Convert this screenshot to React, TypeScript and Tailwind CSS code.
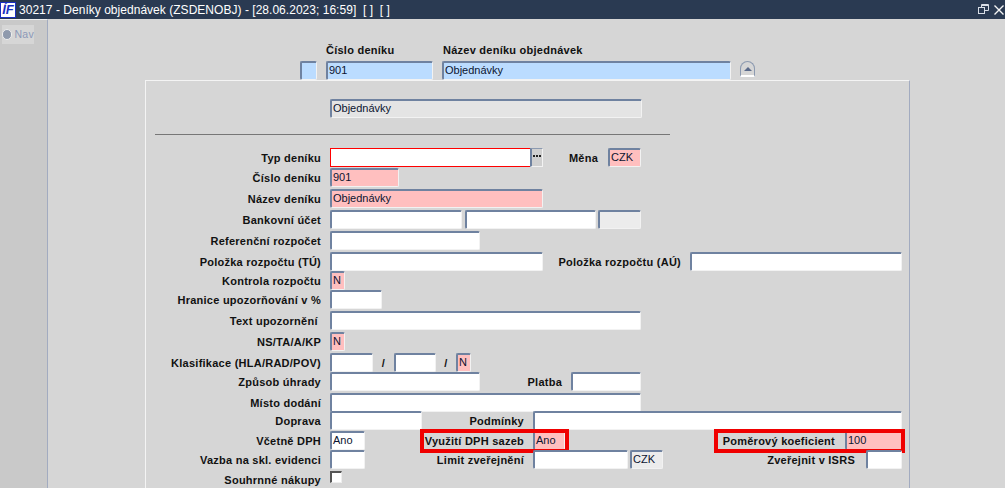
import React from "react";

type FP = { w: string; v?: string; bg?: string; c?: string };
const base =
  "h-[19px] shrink-0 border-t-2 border-l-2 border-r border-b border-t-[#6f82a0] border-l-[#6f82a0] border-r-[#f2f2f2] border-b-[#f2f2f2] rounded-[2px] pl-[1px] text-[11px] leading-[15px] text-[#0c1430] overflow-hidden";

function F({ w, v, bg = "bg-white", c = "" }: FP) {
  return <div className={`${base} ${w} ${bg} ${c}`}>{v}</div>;
}
function L({ children, c = "text-right" }: { children: React.ReactNode; c?: string }) {
  return <div className={`h-[19px] leading-[20px] shrink-0 font-bold text-[11px] tracking-[0.25px] text-[#111] whitespace-pre ${c}`}>{children}</div>;
}
function Row({ h, label, children }: { h: string; label: string; children?: React.ReactNode }) {
  return (
    <div className={`flex items-start relative ${h}`}>
      <L c="w-[174px] mr-[9px] text-right">{label}</L>
      {children}
    </div>
  );
}

export default function App() {
  return (
    <div className="w-[1005px] h-[488px] overflow-hidden flex flex-col bg-[#d6d6d6] font-['Liberation_Sans',Arial,sans-serif]">
      <div className="h-[19px] shrink-0 bg-[#2a3a52] flex items-center text-white">
        <div className="w-[16px] h-[16px] bg-white border border-[#1a2fc0] flex items-center justify-center text-[#1a2fc0] font-bold italic text-[13px] leading-none">ÍF</div>
        <div className="ml-[3px] text-[12px] tracking-[0.03px] whitespace-pre">30217 - Deníky objednávek (ZSDENOBJ) - [28.06.2023; 16:59]  [ ]  [ ]</div>
        <div className="ml-auto flex items-center gap-[5px] mr-[1px]">
          <svg width="11" height="11" viewBox="0 0 11 11" fill="none" stroke="#d8dde6" strokeWidth="1">
            <rect x="0.5" y="3.5" width="6" height="6" />
            <path d="M3.5 3V0.5H10.5V6.5H7" />
            <path d="M3 1.5H10.5" />
          </svg>
          <svg width="10" height="10" viewBox="0 0 10 10" fill="none" stroke="#f4f4f4" strokeWidth="1.4">
            <path d="M0.5 0.5L9.5 9.5M9.5 0.5L0.5 9.5" />
          </svg>
        </div>
      </div>
      <div className="flex flex-1 min-h-0">
        <div className="w-[48px] shrink-0 bg-[#c9c9c9] border-r border-[#a2abc0] border-t border-t-[#f0f0f0] pt-[5px] pl-[2px]">
          <div className="w-[32px] h-[19px] bg-[#d6d6d6] flex items-center gap-[2px]">
            <div className="w-[11px] h-[11px] rounded-full bg-[#8f9aad] border border-[#eeeeee]" />
            <span className="text-[10.5px] text-[#8c99b8] tracking-[0.3px]">Nav</span>
          </div>
        </div>
        <div className="flex-1 min-w-0 flex flex-col pl-[97px]">
          <div className="h-[42px] shrink-0 pt-[23px] flex items-start pl-[181px] font-bold text-[11px] tracking-[0.25px] text-[#111]">
            <span className="w-[117px]">Číslo deníku</span>
            <span>Název deníku objednávek</span>
          </div>
          <div className="h-[19px] shrink-0 flex items-start pl-[155px]">
            <F w="w-[17px]" bg="bg-[#bbdcff]" />
            <F w="w-[107px] ml-[9px]" bg="bg-[#bbdcff]" v="901" />
            <F w="w-[289px] ml-[9px]" bg="bg-[#bbdcff]" v="Objednávky" />
            <div className="ml-[9px] w-[15px] h-[16px] rounded-t-full border border-[#8c9ab0] border-b-2 border-b-white flex items-center justify-center">
              <div className="w-0 h-0 border-l-[4px] border-r-[4px] border-b-[4px] border-l-transparent border-r-transparent border-b-[#5a6a8a]" />
            </div>
          </div>
          <div className="w-[765px] flex-1 border-t border-l border-t-[#f4f4f4] border-l-[#f4f4f4] border-r border-r-[#a2abc0] pt-[18px] pl-[1px]">
            <div className="pl-[183px]">
              <F w="w-[312px]" bg="bg-[#e4e4e4]" v="Objednávky" />
            </div>
            <div className="mt-[16px] ml-[8px] w-[515px] h-[1px] bg-[#777]" />
            <div className="mt-[13px]">
              <Row h="h-[20px]" label="Typ deníku">
                <div className="h-[19px] w-[200px] bg-white border border-[#ff0000] shrink-0 border-r-0" />
                <div className="w-[13px] h-[19px] bg-[#d0d0d0] border-l-2 border-l-[#6f82a0] border-t border-t-[#8c9ab0] border-r border-r-[#f2f2f2] border-b border-b-[#f2f2f2] flex items-center justify-center gap-[1px] pb-[3px]">
                  <span className="w-[2px] h-[2px] bg-[#222]" />
                  <span className="w-[2px] h-[2px] bg-[#222]" />
                  <span className="w-[2px] h-[2px] bg-[#222]" />
                </div>
                <L c="w-[55px] text-right">Měna</L>
                <F w="w-[33px] ml-[10px]" bg="bg-[#ffbfbf]" v="CZK" />
              </Row>
              <Row h="h-[21px]" label="Číslo deníku"><F w="w-[69px]" bg="bg-[#ffbfbf]" v="901" /></Row>
              <Row h="h-[21px]" label="Název deníku"><F w="w-[213px]" bg="bg-[#ffbfbf]" v="Objednávky" /></Row>
              <Row h="h-[21px]" label="Bankovní účet">
                <F w="w-[132px]" />
                <F w="w-[131px] ml-[3px]" />
                <F w="w-[43px] ml-[2px]" bg="bg-[#ececec]" />
              </Row>
              <Row h="h-[21px]" label="Referenční rozpočet"><F w="w-[150px]" /></Row>
              <Row h="h-[19px]" label="Položka rozpočtu (TÚ)">
                <F w="w-[213px]" />
                <L c="w-[138px] text-right">Položka rozpočtu (AÚ)</L>
                <F w="w-[212px] ml-[9px]" />
              </Row>
              <Row h="h-[19px]" label="Kontrola rozpočtu"><F w="w-[15px]" bg="bg-[#ffbfbf]" v="N" /></Row>
              <Row h="h-[21px]" label="Hranice upozorňování v %"><F w="w-[52px]" /></Row>
              <Row h="h-[21px]" label="Text upozornění "><F w="w-[311px]" /></Row>
              <Row h="h-[21px]" label="NS/TA/A/KP"><F w="w-[15px]" bg="bg-[#ffbfbf]" v="N" /></Row>
              <Row h="h-[19px]" label="Klasifikace (HLA/RAD/POV)">
                <F w="w-[43px]" />
                <L c="w-[21px] text-center">/</L>
                <F w="w-[42px]" />
                <L c="w-[20px] text-center">/</L>
                <F w="w-[15px]" bg="bg-[#ffbfbf]" v="N" />
              </Row>
              <Row h="h-[21px]" label="Způsob úhrady">
                <F w="w-[150px]" />
                <L c="w-[82px] text-right">Platba</L>
                <F w="w-[70px] ml-[9px]" />
              </Row>
              <Row h="h-[18px]" label="Místo dodání"><F w="w-[311px]" /></Row>
              <Row h="h-[20px]" label="Doprava">
                <F w="w-[92px]" />
                <L c="w-[102px] text-right">Podmínky</L>
                <F w="w-[369px] ml-[9px]" />
              </Row>
              <Row h="h-[19px]" label="Včetně DPH">
                <F w="w-[35px]" v="Ano" />
                <L c="w-[159px] text-right">Využití DPH sazeb</L>
                <F w="w-[32px] ml-[9px]" bg="bg-[#ffbfbf]" v="Ano" />
                <L c="w-[270px] text-right">Poměrový koeficient</L>
                <F w="w-[57px] ml-[10px]" bg="bg-[#ffbfbf]" v="100" />
                <div className="absolute left-[273px] -top-[2px] w-[149px] h-[24px] border-[4px] border-[#f00000]" />
                <div className="absolute left-[567px] -top-[2px] w-[191px] h-[24px] border-[4px] border-[#f00000]" />
              </Row>
              <Row h="h-[20px]" label="Vazba na skl. evidenci">
                <F w="w-[35px]" />
                <L c="w-[159px] text-right">Limit zveřejnění</L>
                <F w="w-[95px] ml-[9px]" />
                <F w="w-[33px] ml-[2px]" bg="bg-[#ececec]" v="CZK" />
                <L c="w-[192px] text-right">Zveřejnit v ISRS</L>
                <F w="w-[36px] ml-[11px]" />
              </Row>
              <Row h="h-[18px]" label="Souhrnné nákupy">
                <div className="w-[12px] h-[12px] mt-[1px] bg-white border-t-2 border-l-2 border-t-[#555] border-l-[#555] border-r border-b border-r-[#eee] border-b-[#eee]" />
              </Row>
            </div>
          </div>
        </div>
      </div>
    </div>
  );
}
